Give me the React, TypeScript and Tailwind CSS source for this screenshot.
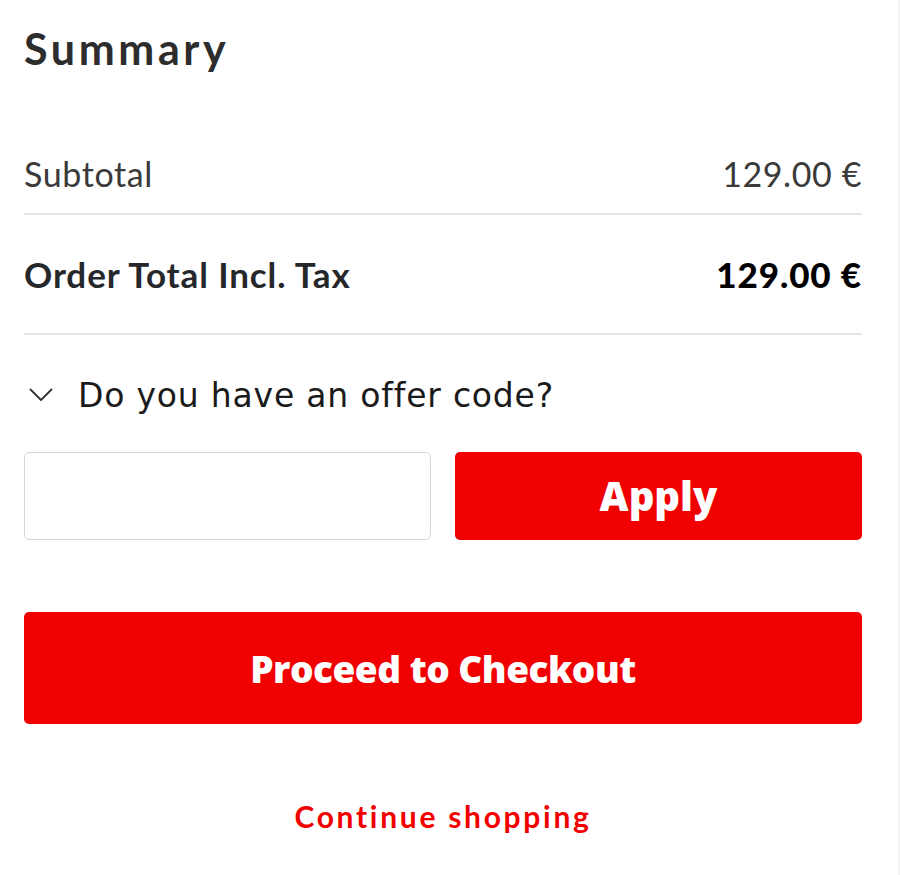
import React from "react";

export default function App() {
  return (
    <div className="flex w-[900px] h-[875px] bg-white">
      <div className="w-[898px] h-full pl-6 pr-[36px] flex flex-col">
        <div className="h-[97px] flex items-center">
          <h1 className="font-['Lato',sans-serif] font-bold text-[43px] leading-none tracking-[3.6px] text-[#2d2d2d]">
            Summary
          </h1>
        </div>
        <div className="mt-[37px] h-[79px] flex items-center justify-between font-['Lato',sans-serif] text-[34px] leading-none tracking-[0.6px] text-[#3a3a3a]">
          <span>Subtotal</span>
          <span>129.00 €</span>
        </div>
        <div className="h-[2px] bg-[#e4e4e4]" />
        <div className="h-[118px] flex items-center justify-between font-['Lato',sans-serif] font-bold text-[35px] leading-none tracking-[0.9px]">
          <span className="text-[#25272b]">Order Total Incl. Tax</span>
          <span className="text-black font-black">129.00 €</span>
        </div>
        <div className="h-[2px] bg-[#e4e4e4]" />
        <div className="mt-[20px] h-[80px] flex items-center">
          <svg width="24" height="14" viewBox="0 0 24 14" className="ml-[5px] mr-[25px]" fill="none">
            <polyline points="1.5,1.5 12,12 22.5,1.5" stroke="#333" strokeWidth="1.8" strokeLinecap="round" strokeLinejoin="round" />
          </svg>
          <span className="font-['DejaVu_Sans',sans-serif] text-[33px] leading-none tracking-[0.8px] text-[#1a1a1a]">
            Do you have an offer code?
          </span>
        </div>
        <div className="mt-[17px] grid grid-cols-2 gap-6 h-[88px]">
          <input
            type="text"
            className="h-full w-full rounded-[5px] border-[1.5px] border-[#d3d6dd] bg-white outline-none px-4 text-[20px]"
          />
          <button className="h-full rounded-[5px] bg-[#f00000] text-white font-['Open_Sans',sans-serif] font-extrabold text-[40px] leading-none">
            Apply
          </button>
        </div>
        <button className="mt-[72px] h-[112px] rounded-[5px] bg-[#f00000] text-white font-['Open_Sans',sans-serif] font-extrabold text-[37px] leading-none tracking-[-0.5px]">
          Proceed to Checkout
        </button>
        <div className="mt-[62px] h-[60px] flex items-center justify-center">
          <a className="font-['Lato',sans-serif] font-bold text-[30px] leading-none tracking-[2.7px] text-[#f20000] cursor-pointer">
            Continue shopping
          </a>
        </div>
      </div>
      <div className="w-[2px] h-full bg-[#f3f3f3]" />
    </div>
  );
}
